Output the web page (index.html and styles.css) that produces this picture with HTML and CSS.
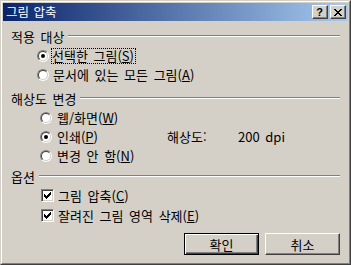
FILE: index.html
```html
<!DOCTYPE html>
<html lang="ko">
<head>
  <meta charset="UTF-8" />
  <title>그림 압축</title>
  <link rel="stylesheet" href="styles.css">
</head>
<body>
  <div class="window">
    <div class="frame">
      <!-- Barra de título -->
      <div class="titlebar">
        <span class="title">그림 압축</span>
        <div class="caption-btns">
          <span class="cbtn help">?</span>
          <span class="cbtn">
            <svg width="8" height="7" viewBox="0 0 8 7">
              <path d="M0 0h2v1h-2zM6 0h2v1h-2zM1 1h2v1h-2zM5 1h2v1h-2zM2 2h4v1h-4zM3 3h2v1h-2zM2 4h4v1h-4zM1 5h2v1h-2zM5 5h2v1h-2zM0 6h2v1h-2zM6 6h2v1h-2z" fill="#000"/>
            </svg>
          </span>
        </div>
      </div>

      <div class="content">
        <!-- 적용 대상 -->
        <div class="group g-target">
          <div class="group-head"><span>적용 대상</span><i class="rule"></i></div>
          <div class="opt"><span class="radio on"></span><span class="focus">선택한 그림(<u>S</u>)</span></div>
          <div class="opt"><span class="radio"></span><span class="txt">문서에 있는 모든 그림(<u>A</u>)</span></div>
        </div>

        <!-- 해상도 변경 -->
        <div class="group g-res">
          <div class="group-head"><span>해상도 변경</span><i class="rule"></i></div>
          <div class="opt"><span class="radio"></span><span class="txt">웹/화면(<u>W</u>)</span></div>
          <div class="opt">
            <span class="radio on"></span><span class="txt opt-label">인쇄(<u>P</u>)</span>
            <span class="res-label">해상도:</span><span>200 dpi</span>
          </div>
          <div class="opt"><span class="radio"></span><span class="txt">변경 안 함(<u>N</u>)</span></div>
        </div>

        <!-- 옵션 -->
        <div class="group g-opts">
          <div class="group-head"><span>옵션</span><i class="rule"></i></div>
          <div class="opt"><span class="check"><svg width="7" height="7" viewBox="0 0 7 7"><path d="M0 2h1v3h-1zM1 3h1v3h-1zM2 4h1v3h-1zM3 3h1v3h-1zM4 2h1v3h-1zM5 1h1v3h-1zM6 0h1v3h-1z" fill="#000"/></svg></span><span class="txt">그림 압축(<u>C</u>)</span></div>
          <div class="opt"><span class="check"><svg width="7" height="7" viewBox="0 0 7 7"><path d="M0 2h1v3h-1zM1 3h1v3h-1zM2 4h1v3h-1zM3 3h1v3h-1zM4 2h1v3h-1zM5 1h1v3h-1zM6 0h1v3h-1z" fill="#000"/></svg></span><span class="txt">잘려진 그림 영역 삭제(<u>E</u>)</span></div>
        </div>

        <div class="actions">
          <button class="btn default">확인</button>
          <button class="btn">취소</button>
        </div>
      </div>
    </div>
  </div>
</body>
</html>
```

FILE: styles.css
```css
body {
  margin: 0;
  padding: 0;
  background: #d4d0c8;
  font-family: 'Noto Sans CJK KR', 'DejaVu Sans', sans-serif;
  font-size: 13px;
  color: #000;
}
.window {
  width: 351px;
  height: 265px;
  box-sizing: border-box;
  border: 1px solid;
  border-color: #d4d0c8 #404040 #404040 #d4d0c8;
  background: #d4d0c8;
}
.frame {
  height: 100%;
  box-sizing: border-box;
  border: 1px solid;
  border-color: #fff #808080 #808080 #fff;
  padding: 1px;
}

/* Barra de título */
.titlebar {
  height: 18px;
  display: flex;
  align-items: center;
  justify-content: space-between;
  background: linear-gradient(to right, #0a246a, #a6caf0);
  padding: 0 2px 0 3px;
}
.title {
  color: #fff;
  font-size: 12.5px;
  line-height: 18px;
  word-spacing: 1px;
}
.caption-btns {
  display: flex;
  gap: 2px;
}
.cbtn {
  width: 16px;
  height: 14px;
  box-sizing: border-box;
  background: #d4d0c8;
  border: 1px solid;
  border-color: #fff #404040 #404040 #fff;
  box-shadow: inset -1px -1px 0 #808080;
  display: flex;
  align-items: center;
  justify-content: center;
}
.cbtn.help {
  font-family: 'Liberation Sans', sans-serif;
  font-weight: bold;
  font-size: 11px;
  line-height: 12px;
  padding-right: 1px;
}

/* Contenido */
.content {
  padding: 6px 8px 0 8px;
  word-spacing: 2px;
}
.group-head {
  height: 19px;
  display: flex;
  align-items: center;
}
.group-head span {
  line-height: 19px;
}
.rule {
  flex: 1;
  height: 0;
  margin: -2px 0 0 4px;
  border-top: 1px solid #808080;
  border-bottom: 1px solid #fff;
}
.opt {
  height: 19px;
  display: flex;
  align-items: center;
  white-space: nowrap;
}
.g-target .opt { padding-left: 26px; }
.g-res { margin-top: 5px; }
.g-res .opt { padding-left: 29px; }
.g-opts { margin-top: 2px; }
.g-opts .opt { padding-left: 30px; height: 19.5px; }

.radio {
  position: relative;
  width: 12px;
  height: 12px;
  box-sizing: border-box;
  border-radius: 50%;
  border: 1px solid;
  border-color: #808080 #fff #fff #808080;
  margin-right: 2px;
  flex: none;
}
.radio::before {
  content: "";
  position: absolute;
  inset: 0;
  border-radius: 50%;
  border: 1px solid;
  border-color: #404040 #d4d0c8 #d4d0c8 #404040;
  background: #fff;
}
.radio.on::after {
  content: "";
  position: absolute;
  left: 3px;
  top: 3px;
  width: 4px;
  height: 4px;
  border-radius: 50%;
  background: #000;
}
.focus {
  border: 1px dotted #000;
  padding: 0 1px 0 0;
  line-height: 14px;
}
.g-target .txt { margin-left: 2px; }
.g-res .txt { margin-left: 3px; }
.opt-label {
  width: 110px;
}
.res-label {
  width: 71px;
}

.check {
  width: 13px;
  height: 13px;
  box-sizing: border-box;
  border: 1px solid;
  border-color: #808080 #fff #fff #808080;
  box-shadow: inset 1px 1px 0 #404040, inset -1px -1px 0 #d4d0c8;
  background: #fff;
  display: flex;
  align-items: center;
  justify-content: center;
  margin-right: 3px;
  flex: none;
}
.g-opts .txt { margin-left: 1px; }

/* Botones */
.actions {
  display: flex;
  justify-content: flex-end;
  gap: 6px;
  margin-top: 8px;
}
.btn {
  width: 75px;
  height: 22px;
  box-sizing: border-box;
  background: #d4d0c8;
  font-family: inherit;
  font-size: 13px;
  padding: 0;
  border: 1px solid;
  border-color: #fff #404040 #404040 #fff;
  box-shadow: inset -1px -1px 0 #808080;
}
.btn.default {
  border: 1px solid #000;
  box-shadow: inset 1px 1px 0 #fff, inset -1px -1px 0 #404040, inset -2px -2px 0 #808080;
}
```
